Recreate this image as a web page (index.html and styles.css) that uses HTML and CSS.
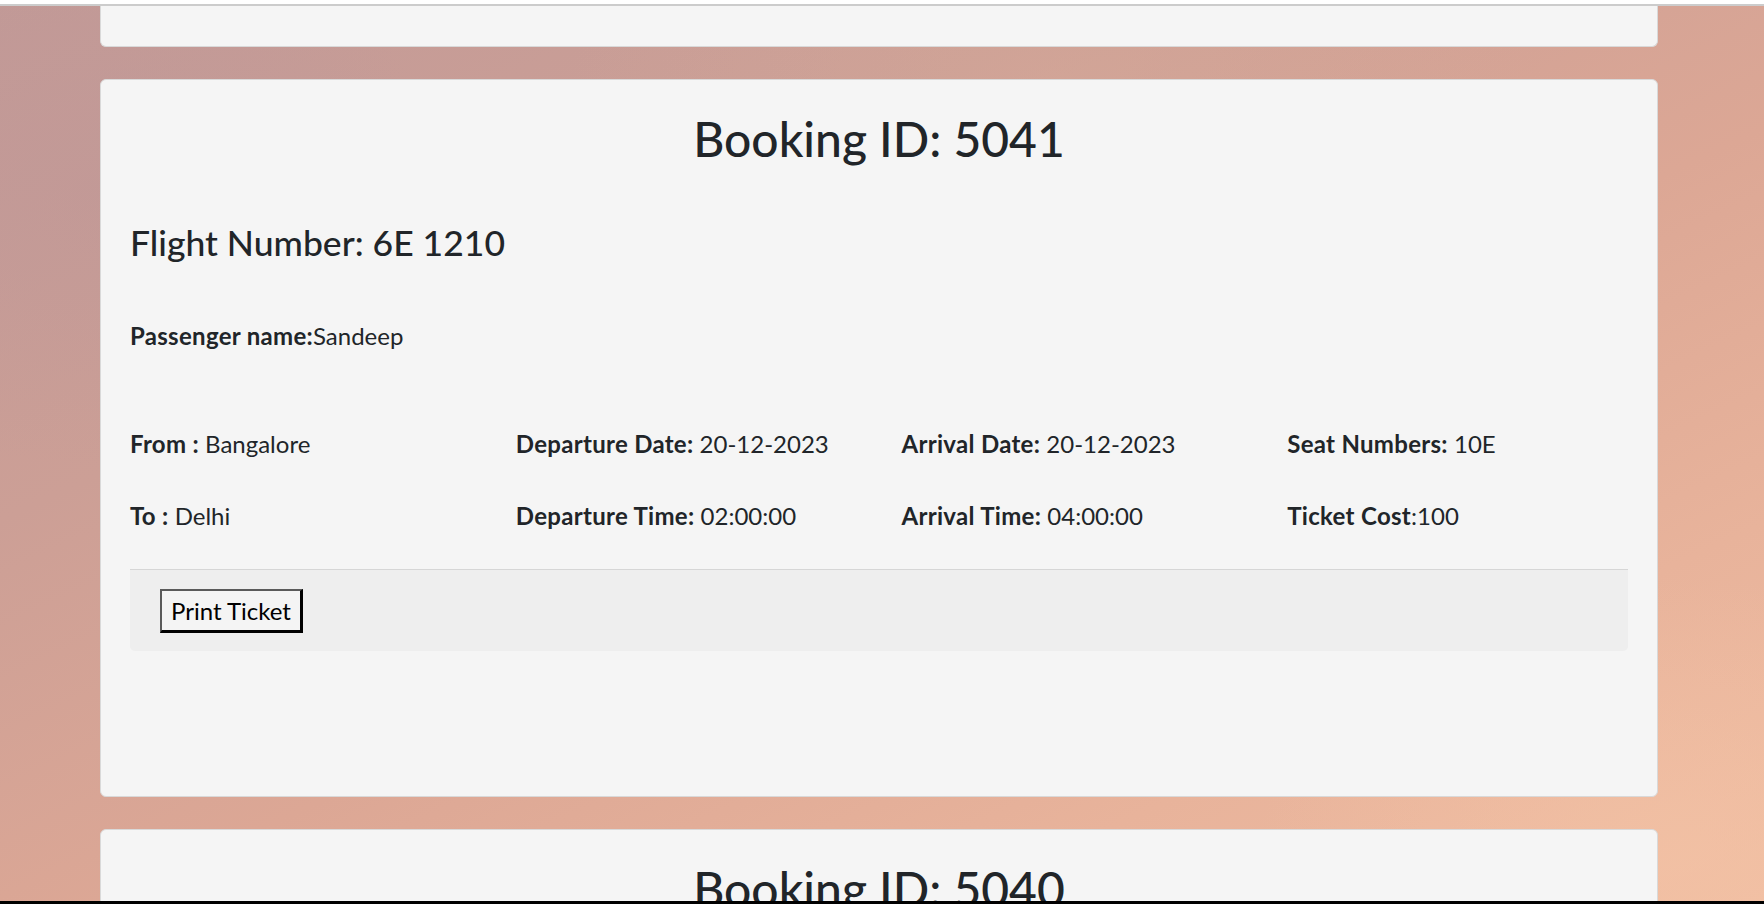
FILE: index.html
```html
<!DOCTYPE html>
<html lang="en">
<head>
<meta charset="utf-8">
<title>My Bookings</title>
<link rel="stylesheet" href="styles.css">
</head>
<body>
<div class="window">
  <div class="topline"></div>
  <main class="viewport">
    <div class="bookings">
      <section class="card card-prev"></section>

      <section class="card">
        <div class="card-body">
          <h2 class="booking-id">Booking ID: 5041</h2>
          <h4 class="flight">Flight Number: 6E 1210</h4>
          <p class="passenger"><b>Passenger name:</b>Sandeep</p>
          <div class="details">
            <p><b>From :</b> Bangalore</p>
            <p><b>Departure Date:</b> 20-12-2023</p>
            <p><b>Arrival Date:</b> 20-12-2023</p>
            <p><b>Seat Numbers:</b> 10E</p>
            <p><b>To :</b> Delhi</p>
            <p><b>Departure Time:</b> 02:00:00</p>
            <p><b>Arrival Time:</b> 04:00:00</p>
            <p><b>Ticket Cost</b>:100</p>
          </div>
          <div class="card-footer">
            <button class="print-btn" type="button">Print Ticket</button>
          </div>
        </div>
      </section>

      <section class="card">
        <div class="card-body">
          <h2 class="booking-id">Booking ID: 5040</h2>
        </div>
      </section>
    </div>
  </main>
  <div class="bottomline"></div>
</div>
</body>
</html>
```

FILE: styles.css
```css
* { box-sizing: border-box; }

html, body {
  margin: 0;
  padding: 0;
  height: 100%;
}

body {
  font-family: Lato, "Open Sans", "Liberation Sans", sans-serif;
  color: #212529;
  font-size: 24px;
  line-height: 1.5;
  overflow: hidden;
}

.window {
  height: 904px;
  display: flex;
  flex-direction: column;
}

.topline {
  height: 6px;
  flex: 0 0 6px;
  background: #ffffff;
  border-bottom: 2px solid #cccccc;
}

.viewport {
  flex: 1 1 auto;
  overflow: hidden;
  background:
    radial-gradient(ellipse 500px 400px at 5% 20%, rgba(190, 150, 150, 0.45), transparent 70%),
    radial-gradient(ellipse 700px 300px at 60% 8%, rgba(214, 170, 152, 0.45), transparent 70%),
    radial-gradient(ellipse 600px 400px at 95% 95%, rgba(244, 196, 166, 0.55), transparent 70%),
    linear-gradient(155deg, #c29a97 0%, #cc9f96 30%, #dca795 55%, #e8b39b 78%, #f0bda2 100%);
}

.bookings {
  display: flex;
  flex-direction: column;
  gap: 32px;
  padding: 0 106px 0 100px;
}

.card {
  background: #f5f5f5;
  border: 1px solid #d9d9d9;
  border-radius: 6px;
}

.card-prev {
  height: 41px;
  border-top: none;
  border-radius: 0 0 6px 6px;
}

.card-body {
  padding: 30px 29px 31px;
}

.booking-id {
  margin: 0;
  font-size: 48px;
  font-weight: 500;
  line-height: 1.2;
  text-align: center;
}

.flight {
  margin: 54px 0 0;
  font-size: 35.5px;
  font-weight: 500;
  line-height: 1.2;
}

.passenger {
  margin: 54px 0 0;
}

b {
  font-weight: 700;
  letter-spacing: 0.3px;
}

.details {
  margin-top: 72px;
  display: grid;
  grid-template-columns: repeat(4, 1fr);
  column-gap: 45px;
  row-gap: 36px;
}

.details p {
  margin: 0;
  white-space: nowrap;
}

.card-footer {
  margin-top: 35px;
  margin-bottom: 114px;
  padding: 19px 30px 18px;
  background: #eeeeee;
  border-top: 1px solid #d6d6d6;
  border-radius: 0 0 5px 5px;
}

.print-btn {
  display: block;
  height: 44px;
  padding: 0 9px;
  font-family: inherit;
  font-size: 24px;
  color: #000000;
  background: #f4f4f4;
  border-style: solid;
  border-width: 2px 3px 3px 2px;
  border-color: #5a5a5a #000000 #000000 #5a5a5a;
  border-radius: 0;
}

.bottomline {
  flex: 0 0 3px;
  background: #000000;
}
```
